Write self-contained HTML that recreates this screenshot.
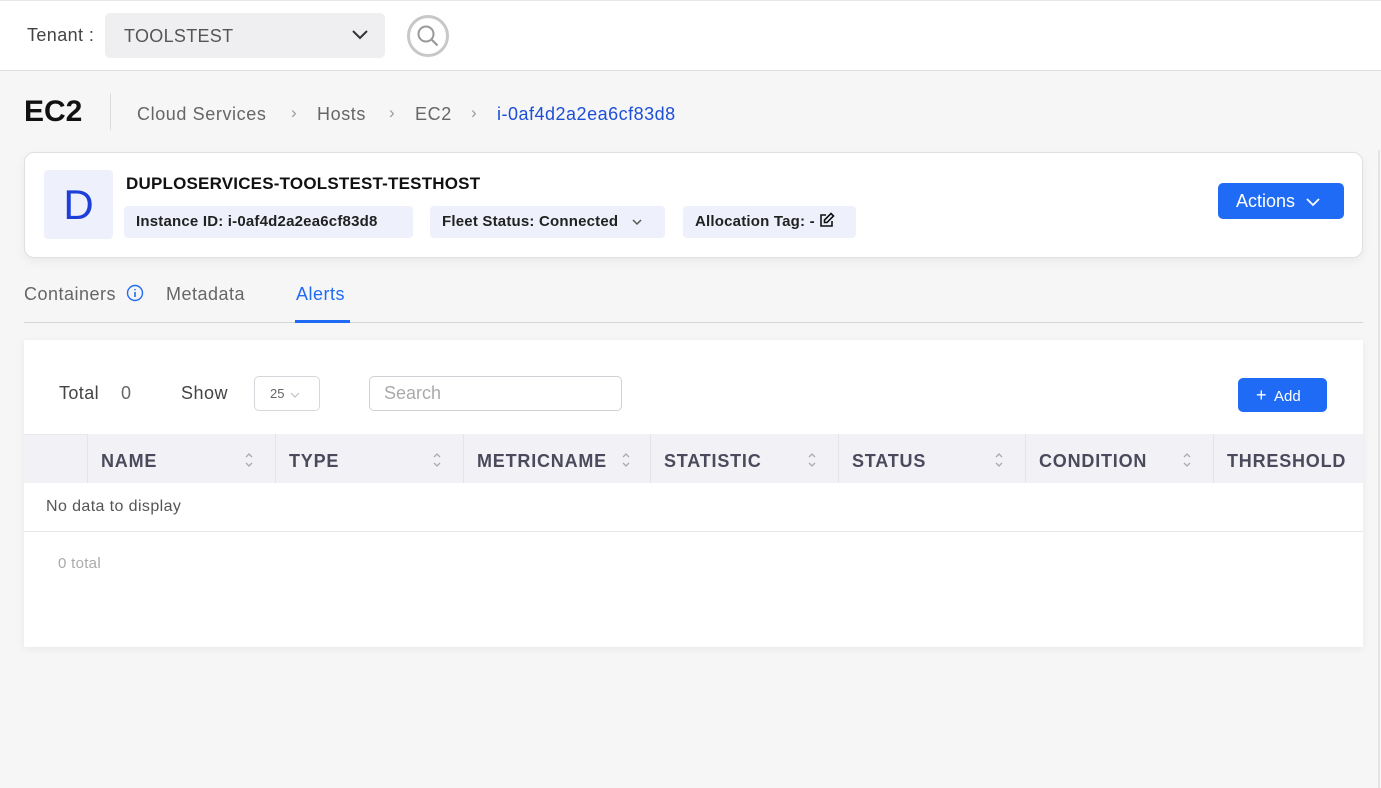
<!DOCTYPE html>
<html><head><meta charset="utf-8"><style>
*{box-sizing:border-box;margin:0;padding:0}
body{width:1381px;height:788px;background:#f6f6f7;font-family:"Liberation Sans",sans-serif;position:relative;overflow:hidden;color:#333}
.abs{position:absolute}
.top{left:0;top:0;width:1381px;height:71px;background:#fff;border-top:1px solid #e6e6e6;border-bottom:1px solid #dedede}
.chip{background:#eef1fb;border-radius:4px;height:32px;top:206px;font-size:15px;font-weight:bold;color:#222;line-height:32px;padding:0 12px;letter-spacing:.2px}
.hc{top:434px;height:49px;background:#f2f2f6;border-left:1px solid #e4e4ea;font-size:18px;font-weight:bold;color:#4a4a5c;line-height:55px;padding-left:13px;letter-spacing:.8px}
.sort{position:absolute;top:17px;width:10px;height:18px}
.bc{font-size:18px;color:#666;letter-spacing:.6px}
</style></head><body>
<div class="abs top"></div>
<div class="abs" style="left:27px;top:25px;font-size:18px;color:#444;letter-spacing:.4px">Tenant :</div>
<div class="abs" style="left:105px;top:13px;width:280px;height:45px;background:#efeff2;border-radius:5px"></div>
<div class="abs" style="left:124px;top:26px;font-size:18px;color:#555;letter-spacing:.3px">TOOLSTEST</div>
<svg class="abs" style="left:351px;top:28px" width="18" height="14"><path d="M2 3l7 7 7-7" fill="none" stroke="#333" stroke-width="2"/></svg>
<svg class="abs" style="left:406px;top:14px" width="44" height="44"><circle cx="22" cy="22" r="19.5" fill="#fff" stroke="#c8c8c8" stroke-width="3"/><circle cx="20" cy="20" r="7.5" fill="none" stroke="#999" stroke-width="2"/><path d="M25.5 25.5l6 6" stroke="#999" stroke-width="2.2"/></svg>

<div class="abs" style="left:24px;top:95px;font-size:30px;font-weight:bold;color:#111">EC2</div>
<div class="abs" style="left:110px;top:93px;width:1px;height:37px;background:#ddd"></div>
<div class="abs bc" style="left:137px;top:104px">Cloud Services</div>
<div class="abs" style="left:291px;top:103px;font-size:17px;color:#999">›</div>
<div class="abs bc" style="left:317px;top:104px">Hosts</div>
<div class="abs" style="left:389px;top:103px;font-size:17px;color:#999">›</div>
<div class="abs bc" style="left:415px;top:104px">EC2</div>
<div class="abs" style="left:471px;top:103px;font-size:17px;color:#999">›</div>
<div class="abs bc" style="left:497px;top:104px;color:#1d4ed8;letter-spacing:.5px">i-0af4d2a2ea6cf83d8</div>

<div class="abs" style="left:24px;top:152px;width:1339px;height:106px;background:#fff;border:1px solid #e0e0e0;border-radius:10px;box-shadow:0 4px 10px rgba(0,0,0,.05)"></div>
<div class="abs" style="left:44px;top:170px;width:69px;height:69px;background:#eef1fb;border-radius:4px;color:#1d3ed8;font-size:42px;text-align:center;line-height:69px">D</div>
<div class="abs" style="left:126px;top:174px;font-size:17px;font-weight:bold;color:#111;letter-spacing:.2px">DUPLOSERVICES-TOOLSTEST-TESTHOST</div>
<div class="abs chip" style="left:124px;width:289px">Instance ID: i-0af4d2a2ea6cf83d8</div>
<div class="abs chip" style="left:430px;width:235px">Fleet Status: Connected <svg width="12" height="8" style="margin-left:8px"><path d="M2 2l4 4 4-4" fill="none" stroke="#555" stroke-width="1.5"/></svg></div>
<div class="abs chip" style="left:683px;width:173px">Allocation Tag: - <svg style="vertical-align:-2px" width="16" height="16"><path d="M7 3H2v11h11V9" fill="none" stroke="#111" stroke-width="1.6"/><path d="M12 1.5l2.5 2.5L8 10.5H5.5V8z" fill="none" stroke="#111" stroke-width="1.6"/></svg></div>
<div class="abs" style="left:1218px;top:183px;width:126px;height:36px;background:#1f6bf5;border-radius:5px;color:#fff;font-size:18px;line-height:36px;padding-left:18px">Actions <svg width="14" height="10" style="margin-left:6px"><path d="M1 2l6 6 6-6" fill="none" stroke="#fff" stroke-width="1.8"/></svg></div>

<div class="abs" style="left:24px;top:284px;font-size:18px;color:#666;letter-spacing:.5px">Containers</div>
<svg class="abs" style="left:126px;top:284px" width="18" height="18"><circle cx="9" cy="9" r="7.5" fill="none" stroke="#1f6bf5" stroke-width="1.4"/><path d="M9 8v5M9 5v1.2" stroke="#1f6bf5" stroke-width="1.6"/></svg>
<div class="abs" style="left:166px;top:284px;font-size:18px;color:#666;letter-spacing:.5px">Metadata</div>
<div class="abs" style="left:296px;top:284px;font-size:18px;color:#1f6bf5;letter-spacing:.5px">Alerts</div>
<div class="abs" style="left:24px;top:322px;width:1339px;height:1px;background:#d6d6d6"></div>
<div class="abs" style="left:295px;top:320px;width:55px;height:3px;background:#1f6bf5"></div>

<div class="abs" style="left:24px;top:340px;width:1339px;height:307px;background:#fff;box-shadow:0 2px 8px rgba(0,0,0,.06)"></div>
<div class="abs" style="left:59px;top:383px;font-size:18px;color:#444;letter-spacing:.4px">Total</div>
<div class="abs" style="left:121px;top:383px;font-size:18px;color:#666">0</div>
<div class="abs" style="left:181px;top:383px;font-size:18px;color:#444;letter-spacing:.5px">Show</div>
<div class="abs" style="left:254px;top:376px;width:66px;height:35px;border:1px solid #d6d6dc;border-radius:5px;font-size:13px;color:#666;line-height:33px;padding-left:15px">25 <svg width="10" height="6" style="margin-left:2px"><path d="M1 1l4 4 4-4" fill="none" stroke="#bbb" stroke-width="1"/></svg></div>
<div class="abs" style="left:369px;top:376px;width:253px;height:35px;border:1px solid #d0d0d6;border-radius:5px;font-size:18px;color:#aaa;line-height:33px;padding-left:14px">Search</div>
<div class="abs" style="left:1238px;top:378px;width:89px;height:34px;background:#1f6bf5;border-radius:5px;color:#fff;font-size:15px;line-height:34px;padding-left:18px"><span style="font-size:18px">+</span>&nbsp; Add</div>

<div class="abs hc" style="left:24px;width:64px;border-left:none;border-top:1px solid #e8e8ee"></div>
<div class="abs hc" style="left:87px;width:188px">NAME<svg class="sort" style="left:156px" viewBox="0 0 10 18"><path d="M2 6l3-3 3 3M2 12l3 3 3-3" fill="none" stroke="#aaa" stroke-width="1.3"/></svg></div>
<div class="abs hc" style="left:275px;width:188px">TYPE<svg class="sort" style="left:156px" viewBox="0 0 10 18"><path d="M2 6l3-3 3 3M2 12l3 3 3-3" fill="none" stroke="#aaa" stroke-width="1.3"/></svg></div>
<div class="abs hc" style="left:463px;width:187px">METRICNAME<svg class="sort" style="left:157px" viewBox="0 0 10 18"><path d="M2 6l3-3 3 3M2 12l3 3 3-3" fill="none" stroke="#aaa" stroke-width="1.3"/></svg></div>
<div class="abs hc" style="left:650px;width:188px">STATISTIC<svg class="sort" style="left:156px" viewBox="0 0 10 18"><path d="M2 6l3-3 3 3M2 12l3 3 3-3" fill="none" stroke="#aaa" stroke-width="1.3"/></svg></div>
<div class="abs hc" style="left:838px;width:187px">STATUS<svg class="sort" style="left:155px" viewBox="0 0 10 18"><path d="M2 6l3-3 3 3M2 12l3 3 3-3" fill="none" stroke="#aaa" stroke-width="1.3"/></svg></div>
<div class="abs hc" style="left:1025px;width:188px">CONDITION<svg class="sort" style="left:156px" viewBox="0 0 10 18"><path d="M2 6l3-3 3 3M2 12l3 3 3-3" fill="none" stroke="#aaa" stroke-width="1.3"/></svg></div>
<div class="abs hc" style="left:1213px;width:150px">THRESHOLD</div>
<div class="abs" style="left:46px;top:498px;font-size:16px;color:#555;letter-spacing:.4px">No data to display</div>
<div class="abs" style="left:24px;top:531px;width:1339px;height:1px;background:#e6e6ea"></div>
<div class="abs" style="left:58px;top:555px;font-size:15px;color:#aaa;letter-spacing:.3px">0 total</div>
<div class="abs" style="left:1378px;top:150px;width:2px;height:638px;background:#e4e4e4"></div>
</body></html>
